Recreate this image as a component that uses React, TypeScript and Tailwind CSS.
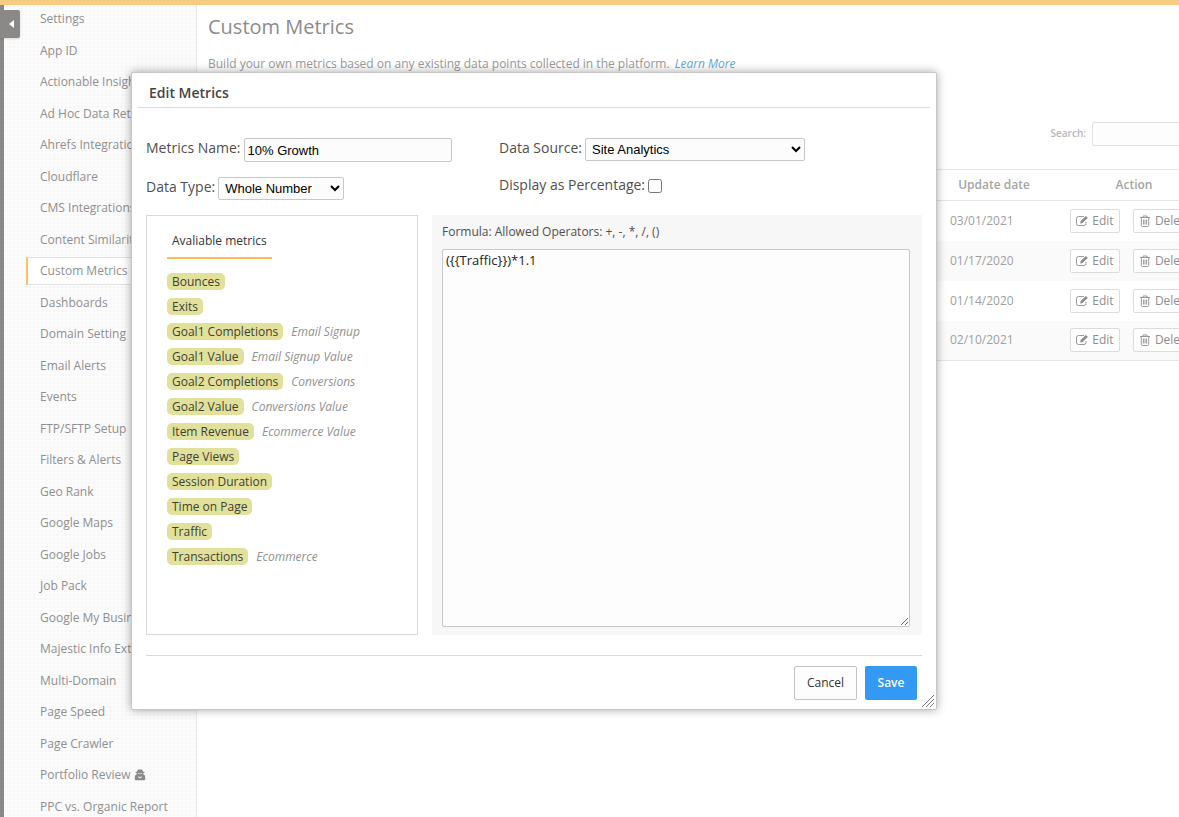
import { useState } from "react";

const MENU = [
  "Settings",
  "App ID",
  "Actionable Insights",
  "Ad Hoc Data Retrieval",
  "Ahrefs Integration",
  "Cloudflare",
  "CMS Integrations",
  "Content Similarity",
  "Custom Metrics",
  "Dashboards",
  "Domain Setting",
  "Email Alerts",
  "Events",
  "FTP/SFTP Setup",
  "Filters & Alerts",
  "Geo Rank",
  "Google Maps",
  "Google Jobs",
  "Job Pack",
  "Google My Business",
  "Majestic Info Extractor",
  "Multi-Domain",
  "Page Speed",
  "Page Crawler",
  "Portfolio Review",
  "PPC vs. Organic Report",
];

const METRICS = [
  { name: "Bounces" },
  { name: "Exits" },
  { name: "Goal1 Completions", note: "Email Signup" },
  { name: "Goal1 Value", note: "Email Signup Value" },
  { name: "Goal2 Completions", note: "Conversions" },
  { name: "Goal2 Value", note: "Conversions Value" },
  { name: "Item Revenue", note: "Ecommerce Value" },
  { name: "Page Views" },
  { name: "Session Duration" },
  { name: "Time on Page" },
  { name: "Traffic" },
  { name: "Transactions", note: "Ecommerce" },
];

const DATES = ["03/01/2021", "01/17/2020", "01/14/2020", "02/10/2021"];

const EditIcon = () => (
  <svg viewBox="0 0 12 12" className="h-3 w-3" fill="none" stroke="currentColor" aria-hidden="true">
    <path d="M8 1.500H2.500a2 2 0 0 0-2 2v5a2 2 0 0 0 2 2h5.500a2 2 0 0 0 2-2V7" strokeWidth="0.9" />
    <path d="M4.200 8.600l.4-2.600L9.900.900l2 1.900-5.300 5.300z" fill="currentColor" stroke="none" />
  </svg>
);

const TrashIcon = () => (
  <svg viewBox="0 0 12 12" className="h-3 w-3" fill="none" stroke="currentColor" strokeWidth="0.9" aria-hidden="true">
    <path d="M1 2.500h10M4 2.500V1h4v1.500M2.300 2.800v7.500c0 .7.400 1.200 1 1.200h5.400c.6 0 1-.5 1-1.200V2.800M4.400 4.500v5M6 4.500v5M7.600 4.500v5" />
  </svg>
);

const AgentIcon = () => (
  <svg viewBox="0 0 12 12" className="h-3 w-3 text-[#8a8a8a]" fill="currentColor" aria-hidden="true">
    <path d="M3.800.500h4.400l.8 2.300h1.400v1.200H9.300v1.300c1.300.4 1.900 1.500 1.900 2.900V10c0 .8-.5 1.300-1.300 1.300H2.100C1.300 11.300.8 10.800.8 10V8.200c0-1.400.6-2.500 1.900-2.900V4H1.600V2.800H3z" />
    <path d="M3.800 4.100h4.400v.7H3.800z" fill="#e4e4e4" />
    <path d="M4 7.200l1.100 2.400.9-1.200.9 1.200L8 7.200l-2 .7z" fill="#f4f4f4" />
  </svg>
);

const Sidebar = () => (
  <aside className="w-[197px] shrink-0 border-r border-l-4 border-r-[#e8e8e8] border-l-[#8a8988] bg-[#fbfbfb] bg-[radial-gradient(#f6f6f6_1px,transparent_1px)] bg-size-[4px_4px]">
    <nav>
      <ul className="-mt-0.5 pl-[22px] text-xs text-[#8f8f8f]">
        {MENU.map((item) => (
          <li key={item} className="flex items-center odd:h-8 even:h-[31px]">
            <a
              href="#"
              className={`flex h-7 w-full items-center gap-1 border-l-2 pl-3 whitespace-nowrap ${
                item === "Custom Metrics"
                  ? "border-y border-y-[#e0e0e0] border-l-[#fbc35f] bg-white"
                  : "border-transparent"
              }`}
            >
              {item}
              {item === "Portfolio Review" && <AgentIcon />}
            </a>
          </li>
        ))}
      </ul>
    </nav>
  </aside>
);

const MetricsTable = () => (
  <table className="w-full min-w-[1012px] table-fixed border-y border-[#e6e6e6] text-xs text-[#a0a0a0]">
    <colgroup>
      <col />
      <col className="w-[108px]" />
      <col className="w-[172px]" />
    </colgroup>
    <thead>
      <tr className="h-[31px] border-b border-[#e6e6e6] text-[#a5a5a5]">
        <th />
        <th className="font-semibold">Update date</th>
        <th className="font-semibold">Action</th>
      </tr>
    </thead>
    <tbody>
      {DATES.map((date) => (
        <tr key={date} className="h-10 even:bg-[#fafafa]">
          <td />
          <td className="pl-[10px]">{date}</td>
          <td className="pl-[22px]">
            <div className="flex gap-[13px] text-[#8d8d8d]">
              <button className="flex h-6 w-[50px] items-center justify-center gap-1 rounded-xs border border-[#dcdcdc] bg-white">
                <EditIcon />
                Edit
              </button>
              <button className="flex h-6 w-[64px] items-center justify-center gap-1 rounded-xs border border-[#dcdcdc] bg-white">
                <TrashIcon />
                Delete
              </button>
            </div>
          </td>
        </tr>
      ))}
    </tbody>
  </table>
);

const EditDialog = () => {
  const [name, setName] = useState("10% Growth");
  const [source, setSource] = useState("Site Analytics");
  const [dataType, setDataType] = useState("Whole Number");
  const [percentage, setPercentage] = useState(false);
  const [formula, setFormula] = useState("({{Traffic}})*1.1");

  return (
    <div
      role="dialog"
      aria-labelledby="dialog-title"
      className="absolute top-[67px] left-[131px] w-[806px] rounded-xs border border-[#c6c6c6] bg-white p-[6px] text-[#4f4f4f] shadow-[0_0_10px_rgba(0,0,0,0.35)]"
    >
      <h2 id="dialog-title" className="h-[29px] border-b border-[#dadada] pl-[11px] text-sm leading-7 font-semibold text-[#444]">
        Edit Metrics
      </h2>

      <div className="px-2 pt-[30px]">
        {/* Fields */}
        <div className="grid h-[77px] grid-cols-[353px_1fr] text-sm">
          <div className="flex flex-col gap-[15px]">
            <div className="flex h-6 items-start gap-[3px]">
              <label htmlFor="name">Metrics Name:</label>
              <input
                id="name"
                className="h-6 w-[208px] rounded-xs border border-[#c8c8c8] bg-[#fcfcfc] px-[3px] font-['Liberation_Sans',sans-serif] text-[13px] text-black"
                value={name}
                onChange={(e) => setName(e.target.value)}
              />
            </div>
            <div className="flex h-6 items-start gap-[3px]">
              <label htmlFor="type">Data Type:</label>
              <select
                id="type"
                className="h-[23px] w-[126px] rounded-xs border border-[#c8c8c8] bg-[#fcfcfc] px-[2px] font-['Liberation_Sans',sans-serif] text-[13px] text-black"
                value={dataType}
                onChange={(e) => setDataType(e.target.value)}
              >
                <option>Whole Number</option>
              </select>
            </div>
          </div>
          <div className="flex flex-col gap-[13px]">
            <div className="flex h-6 items-start gap-[3px]">
              <label htmlFor="source">Data Source:</label>
              <select
                id="source"
                className="h-[23px] w-[220px] rounded-xs border border-[#c8c8c8] bg-[#fcfcfc] px-[2px] font-['Liberation_Sans',sans-serif] text-[13px] text-black"
                value={source}
                onChange={(e) => setSource(e.target.value)}
              >
                <option>Site Analytics</option>
              </select>
            </div>
            <div className="flex h-6 items-start gap-[3px]">
              <label htmlFor="percentage">Display as Percentage:</label>
              <input
                id="percentage"
                type="checkbox"
                className="mt-1 h-[14px] w-[14px]"
                checked={percentage}
                onChange={(e) => setPercentage(e.target.checked)}
              />
            </div>
          </div>
        </div>

        {/* Metrics and formula */}
        <div className="flex gap-[14px] text-xs">
          <div className="w-[272px] shrink-0 border border-[#d9d9d9] px-5 pt-3">
            <h3 className="h-[31px] w-fit border-b-2 border-[#f9bc58] px-[5px] leading-[26px] text-[#333]">Avaliable metrics</h3>
            <ul className="mt-[10px] text-[#3f3f33]">
              {METRICS.map(({ name, note }) => (
                <li key={name} className="flex h-[25px] items-center gap-2">
                  <span className="h-[17px] rounded-[5px] bg-[#e2e19b] px-[5px] leading-[17px]">{name}</span>
                  {note && <em className="text-[#919191]">{note}</em>}
                </li>
              ))}
            </ul>
          </div>
          <div className="flex h-[420px] flex-1 flex-col bg-[#f7f7f7] px-[10px] pb-2">
            <label htmlFor="formula" className="h-[34px] leading-[34px]">
              Formula: Allowed Operators: +, -, *, /, ()
            </label>
            <textarea
              id="formula"
              className="w-[468px] flex-1 rounded-xs border border-[#c8c8c8] bg-[#fdfdfd] px-[3px] py-[2px] text-[13px] text-[#222]"
              value={formula}
              onChange={(e) => setFormula(e.target.value)}
            />
          </div>
        </div>

        <div className="mt-5 flex justify-end gap-2 border-t border-[#d9d9d9] pt-[10px] pr-[5px] pb-[3px] text-xs">
          <button className="h-[34px] w-[63px] rounded-xs border border-[#c3c3c3] bg-[#fdfdfd] text-[#333]">Cancel</button>
          <button className="h-[34px] w-[52px] rounded-xs bg-[#3399f3] font-semibold text-white">Save</button>
        </div>
      </div>

      <svg viewBox="0 0 12 12" className="absolute right-[2px] bottom-[2px] h-3 w-3" stroke="#555" strokeWidth="0.8" aria-hidden="true">
        <path d="M0 12L12 0M4 12l8-8M8 12l4-4" />
      </svg>
    </div>
  );
};

const App = () => {
  return (
    <div className="relative h-screen overflow-hidden border-t-[5px] border-[#f8cb82] bg-white font-['Open_Sans',sans-serif] text-xs">
      <div className="flex">
        <Sidebar />
        <main className="min-w-0 flex-1 pl-[11px] text-[#999]">
          <h1 className="pt-2 text-xl leading-7 text-[#8c8c8c]">Custom Metrics</h1>
          <p className="mt-[13px] leading-5">
            Build your own metrics based on any existing data points collected in the platform.{" "}
            <a href="#" className="ml-[2px] text-[#64a5da] italic">
              Learn More
            </a>
          </p>
          <div className="mt-12 flex h-6 min-w-[1012px] items-center justify-end gap-[6px] text-[10px] font-semibold text-[#b8b8b8]">
            <label htmlFor="search">Search:</label>
            <input id="search" className="h-6 w-32 rounded-xs border border-[#e2e2e2] bg-[#fdfdfd]" />
          </div>
          <div className="pt-[23px]">
            <MetricsTable />
          </div>
        </main>
      </div>

      <button
        aria-label="Collapse menu"
        className="absolute top-[5px] left-0 flex h-7 w-5 items-center justify-center rounded-r-xs bg-[#8a8988] pl-1 shadow"
      >
        <svg viewBox="0 0 6 8" className="h-2 w-[6px]" fill="white" aria-hidden="true">
          <path d="M0 4l5-4v8z" />
        </svg>
      </button>

      <EditDialog />
    </div>
  );
};

export default App;
